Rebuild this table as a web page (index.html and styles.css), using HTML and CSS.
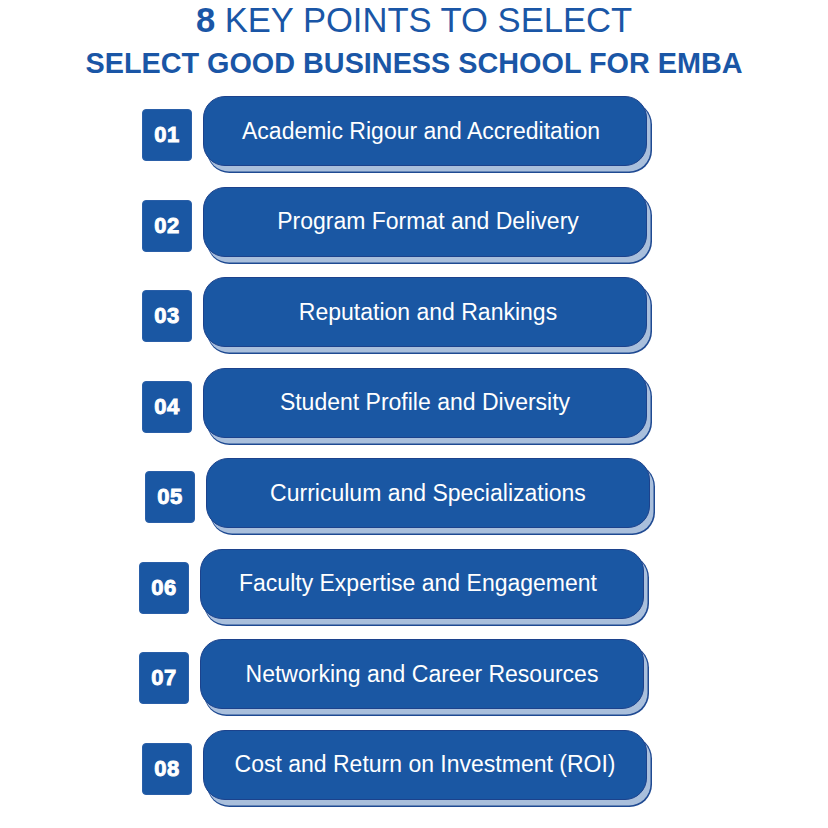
FILE: index.html
```html
<!DOCTYPE html>
<html lang="en">
<head>
<meta charset="utf-8">
<title>8 Key Points to Select Good Business School for EMBA</title>
<link rel="stylesheet" href="styles.css">
</head>
<body>
<main class="page">
  <header class="header">
    <h1 class="title"><strong>8</strong> KEY POINTS TO SELECT</h1>
    <h2 class="subtitle">SELECT GOOD BUSINESS SCHOOL FOR EMBA</h2>
  </header>
  <ol class="list">
    <li class="row"><span class="num">01</span><span class="pill"><span class="pill-text shift-l">Academic Rigour and Accreditation</span></span></li>
    <li class="row"><span class="num">02</span><span class="pill"><span class="pill-text shift-r">Program Format and Delivery</span></span></li>
    <li class="row"><span class="num">03</span><span class="pill"><span class="pill-text shift-r">Reputation and Rankings</span></span></li>
    <li class="row"><span class="num">04</span><span class="pill"><span class="pill-text">Student Profile and Diversity</span></span></li>
    <li class="row row-right"><span class="num">05</span><span class="pill"><span class="pill-text">Curriculum and Specializations</span></span></li>
    <li class="row row-left"><span class="num">06</span><span class="pill"><span class="pill-text shift-l">Faculty Expertise and Engagement</span></span></li>
    <li class="row row-left"><span class="num">07</span><span class="pill"><span class="pill-text">Networking and Career Resources</span></span></li>
    <li class="row"><span class="num">08</span><span class="pill"><span class="pill-text">Cost and Return on Investment (ROI)</span></span></li>
  </ol>
</main>
</body>
</html>
```

FILE: styles.css
```css
* { box-sizing: border-box; }
html, body { margin: 0; padding: 0; background: #ffffff; }
body { font-family: "Liberation Sans", Arial, sans-serif; color: #1a56a6; }
.page { width: 828px; height: 828px; overflow: hidden; }

.header { text-align: center; padding-top: 2px; }
.title {
  margin: 0;
  font-size: 34.6px;
  line-height: 36px;
  font-weight: 400;
  color: #1a56a6;
}
.title strong { font-weight: 700; }
.subtitle {
  margin: 10px 0 0;
  font-size: 28.8px;
  line-height: 30px;
  font-weight: 700;
  color: #1a56a6;
}

.list {
  list-style: none;
  margin: 0;
  padding: 18px 0 0 142px;
  display: flex;
  flex-direction: column;
  gap: 20.5px;
}
.row { display: flex; align-items: flex-start; gap: 11px; }
.row-right { margin-left: 3px; }
.row-left { margin-left: -3px; }

.num {
  margin-top: 13px;
  width: 50px;
  height: 52px;
  border-radius: 4px;
  background: #1a57a3;
  border: 1px solid #2a5fa8;
  color: #fff;
  font-weight: 700;
  font-size: 22px;
  letter-spacing: 0.5px;
  -webkit-text-stroke: 0.9px #fff;
  display: flex;
  align-items: center;
  justify-content: center;
}

.pill {
  position: relative;
  width: 444px;
  height: 70px;
  border-radius: 22px;
  background: #1a57a3;
  border: 1.5px solid #1c428c;
  box-shadow: 4px 6px 0 -0.5px #a9bfdc, 4.5px 6.5px 0 0.5px #1f4a92;
  color: #fff;
  font-size: 23px;
  display: flex;
  align-items: center;
  justify-content: center;
}
.pill-text { display: block; }
.shift-l { margin-right: 8px; }
.shift-r { margin-left: 6px; }
```
